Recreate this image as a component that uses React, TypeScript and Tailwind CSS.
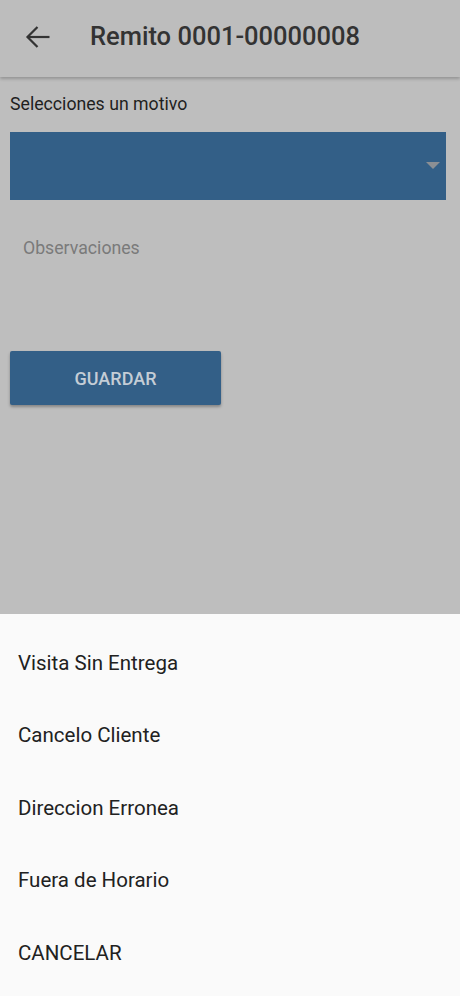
import React from "react";

export default function App() {
  const items = ["Visita Sin Entrega", "Cancelo Cliente", "Direccion Erronea", "Fuera de Horario", "CANCELAR"];
  return (
    <div className="w-[460px] h-[996px] flex flex-col bg-[#bebebe] overflow-hidden" style={{ fontFamily: "Roboto, 'Noto Sans', sans-serif" }}>
      <div className="h-[77px] shrink-0 flex items-center bg-[#bdbdbd] shadow-[0_2px_3px_rgba(0,0,0,0.22)] relative z-10 pb-[4px]">
        <div className="w-[76px] flex justify-center">
          <svg width="26" height="26" viewBox="0 0 26 26" fill="none" stroke="#333333" strokeWidth="2.2" strokeLinecap="butt" strokeLinejoin="miter">
            <path d="M24.5 13H2.5" />
            <path d="M12.5 3L2.5 13l10 10" />
          </svg>
        </div>
        <div className="pl-[14px] text-[25.5px] font-medium text-[#333333] leading-none">Remito 0001-00000008</div>
      </div>
      <div className="flex-1 flex flex-col px-[10px] pt-[16px]">
        <div className="text-[17.7px] text-[#1e1e1e] leading-[22px]">Selecciones un motivo</div>
        <div className="mt-[17px] h-[68px] mr-[4px] bg-[#335f87] flex items-center justify-end pr-[6px]">
          <svg width="14" height="8" viewBox="0 0 14 8"><path d="M0 0h14L7 7z" fill="#8b8f94" /></svg>
        </div>
        <div className="mt-[37px] pl-[13px] text-[17.7px] text-[#7a7a7a] leading-[22px]">Observaciones</div>
        <div className="mt-[92px] w-[211px] h-[54px] bg-[#335f87] rounded-[2px] shadow-[0_2px_3px_rgba(0,0,0,0.3)] flex items-center justify-center text-[18px] font-medium text-[#c4cdd6]">
          GUARDAR
        </div>
      </div>
      <div className="h-[382px] shrink-0 bg-[#fafafa] flex flex-col pt-[13px]">
        {items.map((t) => (
          <div key={t} className="h-[72.5px] flex items-center pl-[18px] text-[20.5px] text-[#212121]">
            {t}
          </div>
        ))}
      </div>
    </div>
  );
}
